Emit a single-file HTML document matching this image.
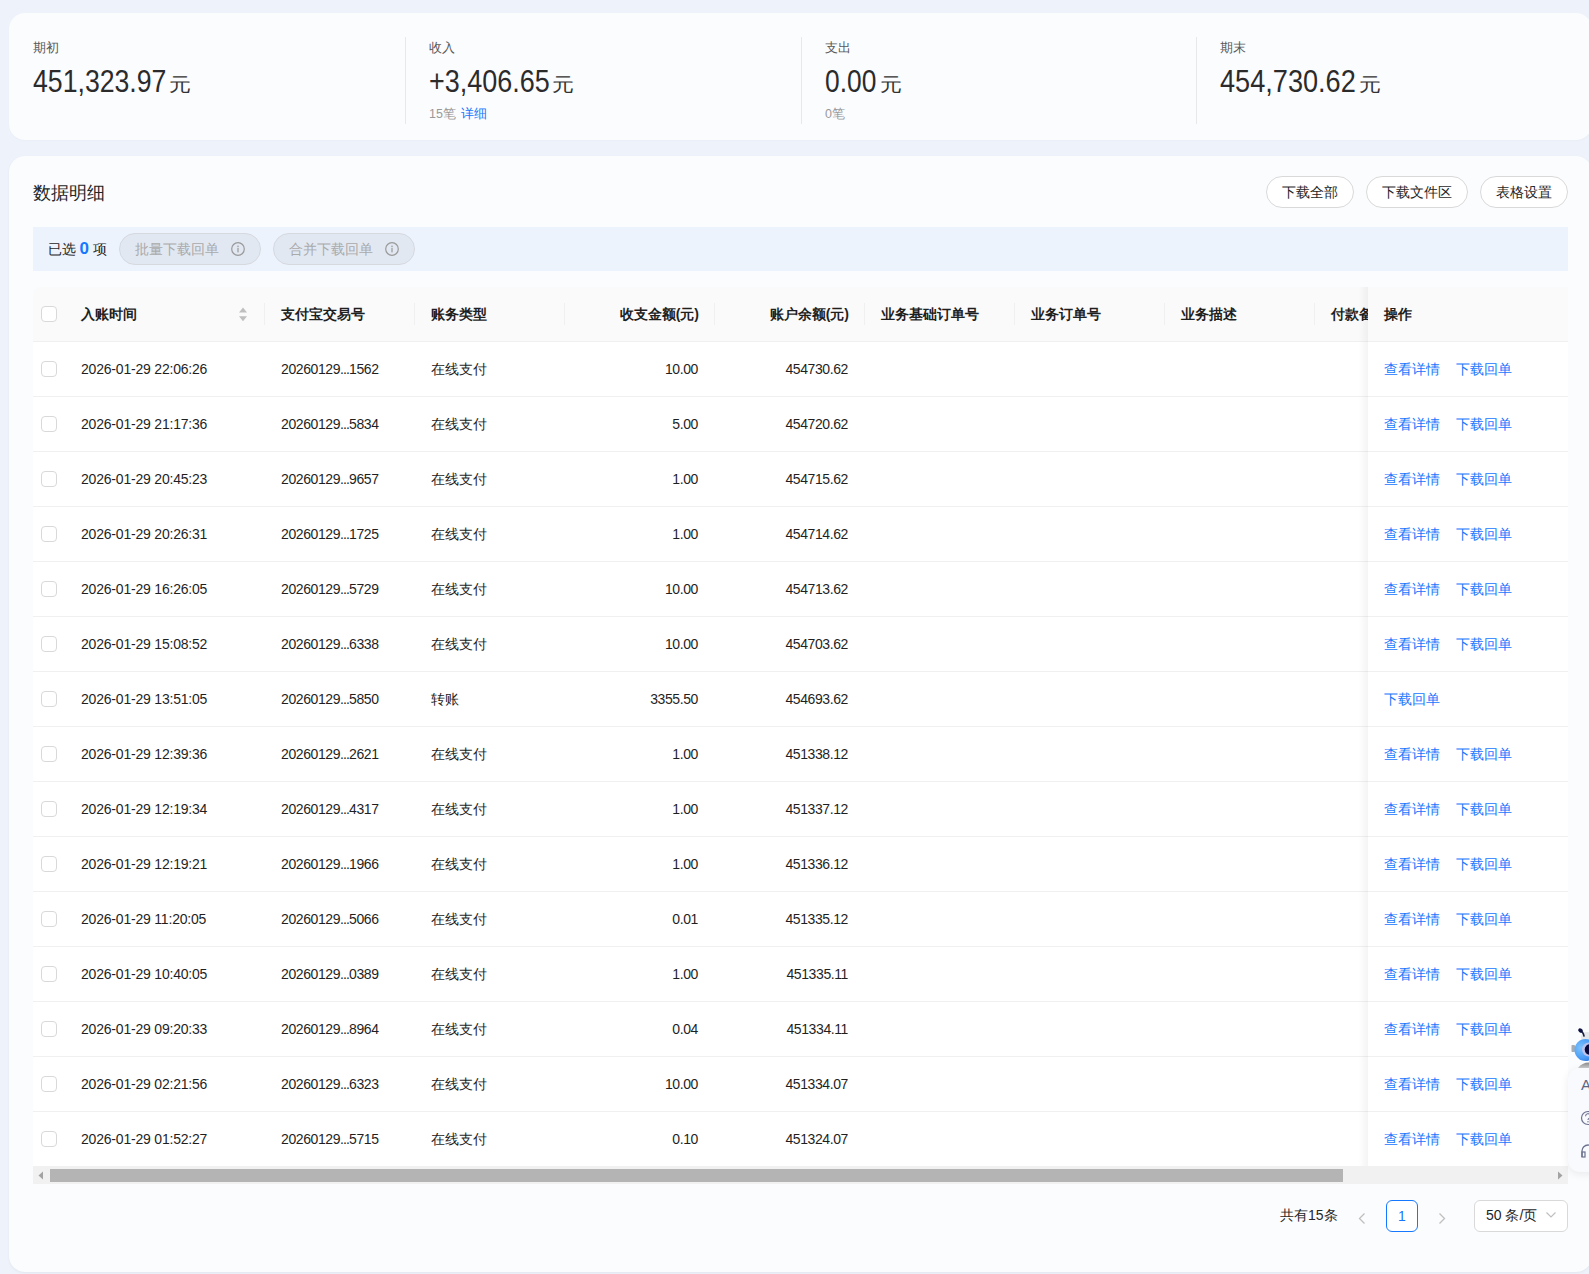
<!DOCTYPE html><html><head><meta charset="utf-8"><style>
*{box-sizing:border-box;margin:0;padding:0}
html,body{width:1589px;height:1274px;overflow:hidden}
body{background:#eef2fa;font-family:"Liberation Sans",sans-serif;color:#1f1f1f;position:relative}
.abs{position:absolute}
.t{position:absolute;white-space:nowrap}
.card{position:absolute;background:#fbfcfe;border-radius:16px}
#c1{left:9px;top:13px;width:1583px;height:127px;box-shadow:0 1px 2px rgba(0,0,0,0.02)}
#c2{left:9px;top:156px;width:1583px;height:1116px;box-shadow:0 1px 3px rgba(0,0,0,0.05)}
.lab{font-size:13px;color:#595959;line-height:20px;top:38px}
.num{font-size:31px;color:#2b2b2b;line-height:40px;top:62px;transform:scaleX(0.86);transform-origin:0 0}
.yuan{font-size:20px;color:#333;line-height:30px;top:69px;transform:scale(1.1,0.95);transform-origin:0 50%}
.sub{font-size:12.5px;color:#999;line-height:20px;top:104px}
.sub a{color:#1677ff;margin-left:2px}
.vdiv{position:absolute;top:37px;width:1px;height:87px;background:#e8e8e8}
.title{left:33px;top:180px;font-size:18px;line-height:26px;color:#262626}
.btn{position:absolute;top:176px;height:32px;border:1px solid #d9d9d9;border-radius:16px;background:#fff;font-size:14px;line-height:30px;text-align:center;color:#1f1f1f}
#selbar{left:33px;top:227px;width:1535px;height:44px;background:#edf3fd}
.seltxt{left:47.5px;top:239px;font-size:14px;line-height:20px;color:#262626}
.seltxt b{color:#1677ff;font-weight:bold;font-size:17px}
.dbtn{position:absolute;top:233px;width:142px;height:32px;border:1px solid #d6d9de;border-radius:16px;background:#e2e8f2;color:#aaa;font-size:14px;line-height:30px;white-space:nowrap}
.dbtn span{position:absolute;left:15px;top:0}
.dbtn svg{position:absolute;left:111px;top:8px}
#thead{left:33px;top:287px;width:1535px;height:55px;background:#fafafa;border-radius:8px 8px 0 0;border-bottom:1px solid #f0f0f0}
.th{position:absolute;top:303px;font-size:14px;font-weight:bold;line-height:22px;color:#1f1f1f;white-space:nowrap}
.sep{position:absolute;top:303px;width:1px;height:22px;background:#f0f0f0}
.row{position:absolute;left:33px;width:1535px;height:55px;background:#fff;border-bottom:1px solid #f0f0f0}
.td{position:absolute;font-size:14px;line-height:22px;color:#1f1f1f;white-space:nowrap}
.r{text-align:right}
.cb{position:absolute;left:41px;width:16px;height:16px;border:1px solid #d9d9d9;border-radius:4px;background:#fff}
.lnk{position:absolute;font-size:14px;line-height:22px;color:#1677ff;white-space:nowrap}
#fixcol{left:1368px;top:287px;width:200px;height:879px;}
#fshadow{left:1358px;top:287px;width:10px;height:879px;background:linear-gradient(to right,rgba(0,0,0,0),rgba(0,0,0,0.015) 40%,rgba(0,0,0,0.045))}
</style></head><body>
<div class="card" id="c1"></div>
<div class="t lab" style="left:33px">期初</div>
<div class="t num" style="left:33px;transform:scaleX(0.86)">451,323.97</div>
<div class="t yuan" style="left:168.5px">元</div>
<div class="vdiv" style="left:405px"></div>
<div class="t lab" style="left:429px">收入</div>
<div class="t num" style="left:429px;transform:scaleX(0.87)">+3,406.65</div>
<div class="t yuan" style="left:551.5px">元</div>
<div class="t sub" style="left:429px">15笔 <a>详细</a></div>
<div class="vdiv" style="left:801px"></div>
<div class="t lab" style="left:825px">支出</div>
<div class="t num" style="left:825px;transform:scaleX(0.85)">0.00</div>
<div class="t yuan" style="left:879.5px">元</div>
<div class="t sub" style="left:825px">0笔</div>
<div class="vdiv" style="left:1196px"></div>
<div class="t lab" style="left:1220px">期末</div>
<div class="t num" style="left:1220px;transform:scaleX(0.875)">454,730.62</div>
<div class="t yuan" style="left:1358.5px">元</div>
<div class="card" id="c2"></div>
<div class="t title">数据明细</div>
<div class="btn" style="left:1266px;width:88px">下载全部</div>
<div class="btn" style="left:1366px;width:102px">下载文件区</div>
<div class="btn" style="left:1480px;width:88px">表格设置</div>
<div class="abs" id="selbar"></div>
<div class="t seltxt">已选 <b>0</b> 项</div>
<div class="dbtn" style="left:119px"><span>批量下载回单</span><svg width="14" height="14" viewBox="0 0 14 14"><circle cx="7" cy="7" r="6.3" fill="none" stroke="#999" stroke-width="1.2"/><circle cx="7" cy="4.2" r="0.8" fill="#999"/><rect x="6.4" y="5.8" width="1.2" height="4.6" fill="#999"/></svg></div>
<div class="dbtn" style="left:273px"><span>合并下载回单</span><svg width="14" height="14" viewBox="0 0 14 14"><circle cx="7" cy="7" r="6.3" fill="none" stroke="#999" stroke-width="1.2"/><circle cx="7" cy="4.2" r="0.8" fill="#999"/><rect x="6.4" y="5.8" width="1.2" height="4.6" fill="#999"/></svg></div>
<div class="abs" id="thead"></div>
<div class="cb" style="top:306px"></div>
<div class="th" style="left:81px">入账时间</div>
<div class="th" style="left:281px">支付宝交易号</div>
<div class="th" style="left:431px">账务类型</div>
<div class="th r" style="left:565px;width:134px">收支金额(元)</div>
<div class="th r" style="left:715px;width:134px">账户余额(元)</div>
<div class="th" style="left:881px">业务基础订单号</div>
<div class="th" style="left:1031px">业务订单号</div>
<div class="th" style="left:1181px">业务描述</div>
<div class="th" style="left:1331px">付款备注</div>
<div class="sep" style="left:264px"></div>
<div class="sep" style="left:414px"></div>
<div class="sep" style="left:564px"></div>
<div class="sep" style="left:714px"></div>
<div class="sep" style="left:864px"></div>
<div class="sep" style="left:1014px"></div>
<div class="sep" style="left:1164px"></div>
<div class="sep" style="left:1314px"></div>
<svg class="abs" style="left:239px;top:307px" width="8" height="15" viewBox="0 0 8 15"><path d="M4 0.5 L8 5.5 H0Z M0 9.3 H8 L4 14.3Z" fill="#bfbfbf"/></svg>
<div class="row" style="top:342px"></div>
<div class="cb" style="top:361px"></div>
<div class="td" style="left:81px;top:358px;letter-spacing:-0.2px">2026-01-29 22:06:26</div>
<div class="td" style="left:281px;top:358px;letter-spacing:-0.4px">20260129<span style='letter-spacing:-0.9px'>...</span>1562</div>
<div class="td" style="left:431px;top:358px">在线支付</div>
<div class="td r" style="left:565px;width:133px;top:358px;letter-spacing:-0.4px">10.00</div>
<div class="td r" style="left:715px;width:133px;top:358px;letter-spacing:-0.4px">454730.62</div>
<div class="row" style="top:397px"></div>
<div class="cb" style="top:416px"></div>
<div class="td" style="left:81px;top:413px;letter-spacing:-0.2px">2026-01-29 21:17:36</div>
<div class="td" style="left:281px;top:413px;letter-spacing:-0.4px">20260129<span style='letter-spacing:-0.9px'>...</span>5834</div>
<div class="td" style="left:431px;top:413px">在线支付</div>
<div class="td r" style="left:565px;width:133px;top:413px;letter-spacing:-0.4px">5.00</div>
<div class="td r" style="left:715px;width:133px;top:413px;letter-spacing:-0.4px">454720.62</div>
<div class="row" style="top:452px"></div>
<div class="cb" style="top:471px"></div>
<div class="td" style="left:81px;top:468px;letter-spacing:-0.2px">2026-01-29 20:45:23</div>
<div class="td" style="left:281px;top:468px;letter-spacing:-0.4px">20260129<span style='letter-spacing:-0.9px'>...</span>9657</div>
<div class="td" style="left:431px;top:468px">在线支付</div>
<div class="td r" style="left:565px;width:133px;top:468px;letter-spacing:-0.4px">1.00</div>
<div class="td r" style="left:715px;width:133px;top:468px;letter-spacing:-0.4px">454715.62</div>
<div class="row" style="top:507px"></div>
<div class="cb" style="top:526px"></div>
<div class="td" style="left:81px;top:523px;letter-spacing:-0.2px">2026-01-29 20:26:31</div>
<div class="td" style="left:281px;top:523px;letter-spacing:-0.4px">20260129<span style='letter-spacing:-0.9px'>...</span>1725</div>
<div class="td" style="left:431px;top:523px">在线支付</div>
<div class="td r" style="left:565px;width:133px;top:523px;letter-spacing:-0.4px">1.00</div>
<div class="td r" style="left:715px;width:133px;top:523px;letter-spacing:-0.4px">454714.62</div>
<div class="row" style="top:562px"></div>
<div class="cb" style="top:581px"></div>
<div class="td" style="left:81px;top:578px;letter-spacing:-0.2px">2026-01-29 16:26:05</div>
<div class="td" style="left:281px;top:578px;letter-spacing:-0.4px">20260129<span style='letter-spacing:-0.9px'>...</span>5729</div>
<div class="td" style="left:431px;top:578px">在线支付</div>
<div class="td r" style="left:565px;width:133px;top:578px;letter-spacing:-0.4px">10.00</div>
<div class="td r" style="left:715px;width:133px;top:578px;letter-spacing:-0.4px">454713.62</div>
<div class="row" style="top:617px"></div>
<div class="cb" style="top:636px"></div>
<div class="td" style="left:81px;top:633px;letter-spacing:-0.2px">2026-01-29 15:08:52</div>
<div class="td" style="left:281px;top:633px;letter-spacing:-0.4px">20260129<span style='letter-spacing:-0.9px'>...</span>6338</div>
<div class="td" style="left:431px;top:633px">在线支付</div>
<div class="td r" style="left:565px;width:133px;top:633px;letter-spacing:-0.4px">10.00</div>
<div class="td r" style="left:715px;width:133px;top:633px;letter-spacing:-0.4px">454703.62</div>
<div class="row" style="top:672px"></div>
<div class="cb" style="top:691px"></div>
<div class="td" style="left:81px;top:688px;letter-spacing:-0.2px">2026-01-29 13:51:05</div>
<div class="td" style="left:281px;top:688px;letter-spacing:-0.4px">20260129<span style='letter-spacing:-0.9px'>...</span>5850</div>
<div class="td" style="left:431px;top:688px">转账</div>
<div class="td r" style="left:565px;width:133px;top:688px;letter-spacing:-0.4px">3355.50</div>
<div class="td r" style="left:715px;width:133px;top:688px;letter-spacing:-0.4px">454693.62</div>
<div class="row" style="top:727px"></div>
<div class="cb" style="top:746px"></div>
<div class="td" style="left:81px;top:743px;letter-spacing:-0.2px">2026-01-29 12:39:36</div>
<div class="td" style="left:281px;top:743px;letter-spacing:-0.4px">20260129<span style='letter-spacing:-0.9px'>...</span>2621</div>
<div class="td" style="left:431px;top:743px">在线支付</div>
<div class="td r" style="left:565px;width:133px;top:743px;letter-spacing:-0.4px">1.00</div>
<div class="td r" style="left:715px;width:133px;top:743px;letter-spacing:-0.4px">451338.12</div>
<div class="row" style="top:782px"></div>
<div class="cb" style="top:801px"></div>
<div class="td" style="left:81px;top:798px;letter-spacing:-0.2px">2026-01-29 12:19:34</div>
<div class="td" style="left:281px;top:798px;letter-spacing:-0.4px">20260129<span style='letter-spacing:-0.9px'>...</span>4317</div>
<div class="td" style="left:431px;top:798px">在线支付</div>
<div class="td r" style="left:565px;width:133px;top:798px;letter-spacing:-0.4px">1.00</div>
<div class="td r" style="left:715px;width:133px;top:798px;letter-spacing:-0.4px">451337.12</div>
<div class="row" style="top:837px"></div>
<div class="cb" style="top:856px"></div>
<div class="td" style="left:81px;top:853px;letter-spacing:-0.2px">2026-01-29 12:19:21</div>
<div class="td" style="left:281px;top:853px;letter-spacing:-0.4px">20260129<span style='letter-spacing:-0.9px'>...</span>1966</div>
<div class="td" style="left:431px;top:853px">在线支付</div>
<div class="td r" style="left:565px;width:133px;top:853px;letter-spacing:-0.4px">1.00</div>
<div class="td r" style="left:715px;width:133px;top:853px;letter-spacing:-0.4px">451336.12</div>
<div class="row" style="top:892px"></div>
<div class="cb" style="top:911px"></div>
<div class="td" style="left:81px;top:908px;letter-spacing:-0.2px">2026-01-29 11:20:05</div>
<div class="td" style="left:281px;top:908px;letter-spacing:-0.4px">20260129<span style='letter-spacing:-0.9px'>...</span>5066</div>
<div class="td" style="left:431px;top:908px">在线支付</div>
<div class="td r" style="left:565px;width:133px;top:908px;letter-spacing:-0.4px">0.01</div>
<div class="td r" style="left:715px;width:133px;top:908px;letter-spacing:-0.4px">451335.12</div>
<div class="row" style="top:947px"></div>
<div class="cb" style="top:966px"></div>
<div class="td" style="left:81px;top:963px;letter-spacing:-0.2px">2026-01-29 10:40:05</div>
<div class="td" style="left:281px;top:963px;letter-spacing:-0.4px">20260129<span style='letter-spacing:-0.9px'>...</span>0389</div>
<div class="td" style="left:431px;top:963px">在线支付</div>
<div class="td r" style="left:565px;width:133px;top:963px;letter-spacing:-0.4px">1.00</div>
<div class="td r" style="left:715px;width:133px;top:963px;letter-spacing:-0.4px">451335.11</div>
<div class="row" style="top:1002px"></div>
<div class="cb" style="top:1021px"></div>
<div class="td" style="left:81px;top:1018px;letter-spacing:-0.2px">2026-01-29 09:20:33</div>
<div class="td" style="left:281px;top:1018px;letter-spacing:-0.4px">20260129<span style='letter-spacing:-0.9px'>...</span>8964</div>
<div class="td" style="left:431px;top:1018px">在线支付</div>
<div class="td r" style="left:565px;width:133px;top:1018px;letter-spacing:-0.4px">0.04</div>
<div class="td r" style="left:715px;width:133px;top:1018px;letter-spacing:-0.4px">451334.11</div>
<div class="row" style="top:1057px"></div>
<div class="cb" style="top:1076px"></div>
<div class="td" style="left:81px;top:1073px;letter-spacing:-0.2px">2026-01-29 02:21:56</div>
<div class="td" style="left:281px;top:1073px;letter-spacing:-0.4px">20260129<span style='letter-spacing:-0.9px'>...</span>6323</div>
<div class="td" style="left:431px;top:1073px">在线支付</div>
<div class="td r" style="left:565px;width:133px;top:1073px;letter-spacing:-0.4px">10.00</div>
<div class="td r" style="left:715px;width:133px;top:1073px;letter-spacing:-0.4px">451334.07</div>
<div class="row" style="top:1112px"></div>
<div class="cb" style="top:1131px"></div>
<div class="td" style="left:81px;top:1128px;letter-spacing:-0.2px">2026-01-29 01:52:27</div>
<div class="td" style="left:281px;top:1128px;letter-spacing:-0.4px">20260129<span style='letter-spacing:-0.9px'>...</span>5715</div>
<div class="td" style="left:431px;top:1128px">在线支付</div>
<div class="td r" style="left:565px;width:133px;top:1128px;letter-spacing:-0.4px">0.10</div>
<div class="td r" style="left:715px;width:133px;top:1128px;letter-spacing:-0.4px">451324.07</div>
<div class="abs" id="fshadow"></div><div class="abs" id="fixcol">
<div style="position:absolute;left:0;top:0;width:200px;height:55px;background:#fafafa;border-bottom:1px solid #f0f0f0"></div>
<div style="position:absolute;left:0;top:55px;width:200px;height:55px;background:#fff;border-bottom:1px solid #f0f0f0"></div>
<div style="position:absolute;left:0;top:110px;width:200px;height:55px;background:#fff;border-bottom:1px solid #f0f0f0"></div>
<div style="position:absolute;left:0;top:165px;width:200px;height:55px;background:#fff;border-bottom:1px solid #f0f0f0"></div>
<div style="position:absolute;left:0;top:220px;width:200px;height:55px;background:#fff;border-bottom:1px solid #f0f0f0"></div>
<div style="position:absolute;left:0;top:275px;width:200px;height:55px;background:#fff;border-bottom:1px solid #f0f0f0"></div>
<div style="position:absolute;left:0;top:330px;width:200px;height:55px;background:#fff;border-bottom:1px solid #f0f0f0"></div>
<div style="position:absolute;left:0;top:385px;width:200px;height:55px;background:#fff;border-bottom:1px solid #f0f0f0"></div>
<div style="position:absolute;left:0;top:440px;width:200px;height:55px;background:#fff;border-bottom:1px solid #f0f0f0"></div>
<div style="position:absolute;left:0;top:495px;width:200px;height:55px;background:#fff;border-bottom:1px solid #f0f0f0"></div>
<div style="position:absolute;left:0;top:550px;width:200px;height:55px;background:#fff;border-bottom:1px solid #f0f0f0"></div>
<div style="position:absolute;left:0;top:605px;width:200px;height:55px;background:#fff;border-bottom:1px solid #f0f0f0"></div>
<div style="position:absolute;left:0;top:660px;width:200px;height:55px;background:#fff;border-bottom:1px solid #f0f0f0"></div>
<div style="position:absolute;left:0;top:715px;width:200px;height:55px;background:#fff;border-bottom:1px solid #f0f0f0"></div>
<div style="position:absolute;left:0;top:770px;width:200px;height:55px;background:#fff;border-bottom:1px solid #f0f0f0"></div>
<div style="position:absolute;left:0;top:825px;width:200px;height:55px;background:#fff;border-bottom:1px solid #f0f0f0"></div>
</div>
<div class="th" style="left:1384px">操作</div>
<div class="lnk" style="left:1384px;top:358px">查看详情</div><div class="lnk" style="left:1456px;top:358px">下载回单</div>
<div class="lnk" style="left:1384px;top:413px">查看详情</div><div class="lnk" style="left:1456px;top:413px">下载回单</div>
<div class="lnk" style="left:1384px;top:468px">查看详情</div><div class="lnk" style="left:1456px;top:468px">下载回单</div>
<div class="lnk" style="left:1384px;top:523px">查看详情</div><div class="lnk" style="left:1456px;top:523px">下载回单</div>
<div class="lnk" style="left:1384px;top:578px">查看详情</div><div class="lnk" style="left:1456px;top:578px">下载回单</div>
<div class="lnk" style="left:1384px;top:633px">查看详情</div><div class="lnk" style="left:1456px;top:633px">下载回单</div>
<div class="lnk" style="left:1384px;top:688px">下载回单</div>
<div class="lnk" style="left:1384px;top:743px">查看详情</div><div class="lnk" style="left:1456px;top:743px">下载回单</div>
<div class="lnk" style="left:1384px;top:798px">查看详情</div><div class="lnk" style="left:1456px;top:798px">下载回单</div>
<div class="lnk" style="left:1384px;top:853px">查看详情</div><div class="lnk" style="left:1456px;top:853px">下载回单</div>
<div class="lnk" style="left:1384px;top:908px">查看详情</div><div class="lnk" style="left:1456px;top:908px">下载回单</div>
<div class="lnk" style="left:1384px;top:963px">查看详情</div><div class="lnk" style="left:1456px;top:963px">下载回单</div>
<div class="lnk" style="left:1384px;top:1018px">查看详情</div><div class="lnk" style="left:1456px;top:1018px">下载回单</div>
<div class="lnk" style="left:1384px;top:1073px">查看详情</div><div class="lnk" style="left:1456px;top:1073px">下载回单</div>
<div class="lnk" style="left:1384px;top:1128px">查看详情</div><div class="lnk" style="left:1456px;top:1128px">下载回单</div>
<div class="abs" style="left:33px;top:1166px;width:1535px;height:18px;background:#f1f1f1"></div>
<div class="abs" style="left:50px;top:1169px;width:1293px;height:13px;background:#b4b4b4"></div>
<svg class="abs" style="left:38px;top:1171px" width="6" height="9" viewBox="0 0 6 9"><path d="M5 0.5V8.5L0.5 4.5Z" fill="#a3a3a3"/></svg>
<svg class="abs" style="left:1557px;top:1171px" width="6" height="9" viewBox="0 0 6 9"><path d="M1 0.5V8.5L5.5 4.5Z" fill="#a3a3a3"/></svg>
<div class="t" style="left:1280px;top:1205px;font-size:14px;line-height:20px;color:#262626">共有15条</div>
<svg class="abs" style="left:1357px;top:1212px" width="10" height="13" viewBox="0 0 10 13"><path d="M7.5 1.5 L2.5 6.5 L7.5 11.5" fill="none" stroke="#bfbfbf" stroke-width="1.3"/></svg>
<div class="abs" style="left:1386px;top:1200px;width:32px;height:32px;border:1px solid #1677ff;border-radius:6px;background:#fff;color:#1677ff;font-size:14px;line-height:30px;text-align:center">1</div>
<svg class="abs" style="left:1437px;top:1212px" width="10" height="13" viewBox="0 0 10 13"><path d="M2.5 1.5 L7.5 6.5 L2.5 11.5" fill="none" stroke="#bfbfbf" stroke-width="1.3"/></svg>
<div class="abs" style="left:1474px;top:1200px;width:94px;height:32px;border:1px solid #d9d9d9;border-radius:6px;background:#fff"></div>
<div class="t" style="left:1486px;top:1205px;font-size:14px;line-height:20px;color:#1f1f1f">50 条/页</div>
<svg class="abs" style="left:1545px;top:1210px" width="12" height="10" viewBox="0 0 12 10"><path d="M1.5 2.5 L6 7 L10.5 2.5" fill="none" stroke="#bfbfbf" stroke-width="1.2"/></svg>
<div class="abs" style="left:1568px;top:1068px;width:40px;height:104px;background:#f9fafd;border-radius:12px;box-shadow:0 2px 8px rgba(0,0,0,0.08)"></div>
<div class="t" style="left:1581px;top:1077px;font-size:15px;line-height:16px;color:#5b6685">A</div>
<svg class="abs" style="left:1580px;top:1110px" width="16" height="16" viewBox="0 0 16 16"><circle cx="8" cy="8" r="6.5" fill="none" stroke="#6b7290" stroke-width="1.2"/><path d="M5.6 6.2 A2.4 2.4 0 1 1 9.2 8.2 Q8 8.8 8 10" fill="none" stroke="#6b7290" stroke-width="1.1"/><circle cx="8" cy="11.8" r="0.7" fill="#6b7290"/></svg>
<svg class="abs" style="left:1580px;top:1144px" width="16" height="14" viewBox="0 0 16 14"><path d="M2 13 V7 A6 6 0 0 1 14 7" fill="none" stroke="#6b7290" stroke-width="1.3"/><rect x="2" y="8" width="3" height="5" fill="none" stroke="#6b7290" stroke-width="1.2"/></svg>
<svg class="abs" style="left:1565px;top:1022px" width="24" height="50" viewBox="0 0 24 50"><defs><radialGradient id="bl" cx="0.3" cy="0.4" r="0.8"><stop offset="0" stop-color="#7cc4ff"/><stop offset="0.6" stop-color="#4a9cf5"/><stop offset="1" stop-color="#2f6fd8"/></radialGradient><linearGradient id="bs" x1="0" y1="0" x2="0" y2="1"><stop offset="0" stop-color="#8a8a8a"/><stop offset="1" stop-color="#c8c8c8"/></linearGradient></defs><ellipse cx="22" cy="15" rx="6" ry="5" fill="#e4e6ea"/><path d="M15 8.5 Q18 9.5 19 14" stroke="#1c2040" stroke-width="1.6" fill="none" stroke-linecap="round"/><ellipse cx="15.5" cy="8.5" rx="2.4" ry="1.9" fill="#0f1240" transform="rotate(30 15.5 8.5)"/><rect x="6.5" y="23" width="3.5" height="7" rx="0.8" fill="#a8abb0"/><circle cx="20.5" cy="28" r="11" fill="url(#bl)"/><circle cx="24" cy="27.5" r="7" fill="#b9c3ee"/><circle cx="25" cy="27.5" r="5.3" fill="#0a0a38"/><path d="M13 46 Q17 40.5 24 40.5 V46Z" fill="url(#bs)"/></svg>
</body></html>
